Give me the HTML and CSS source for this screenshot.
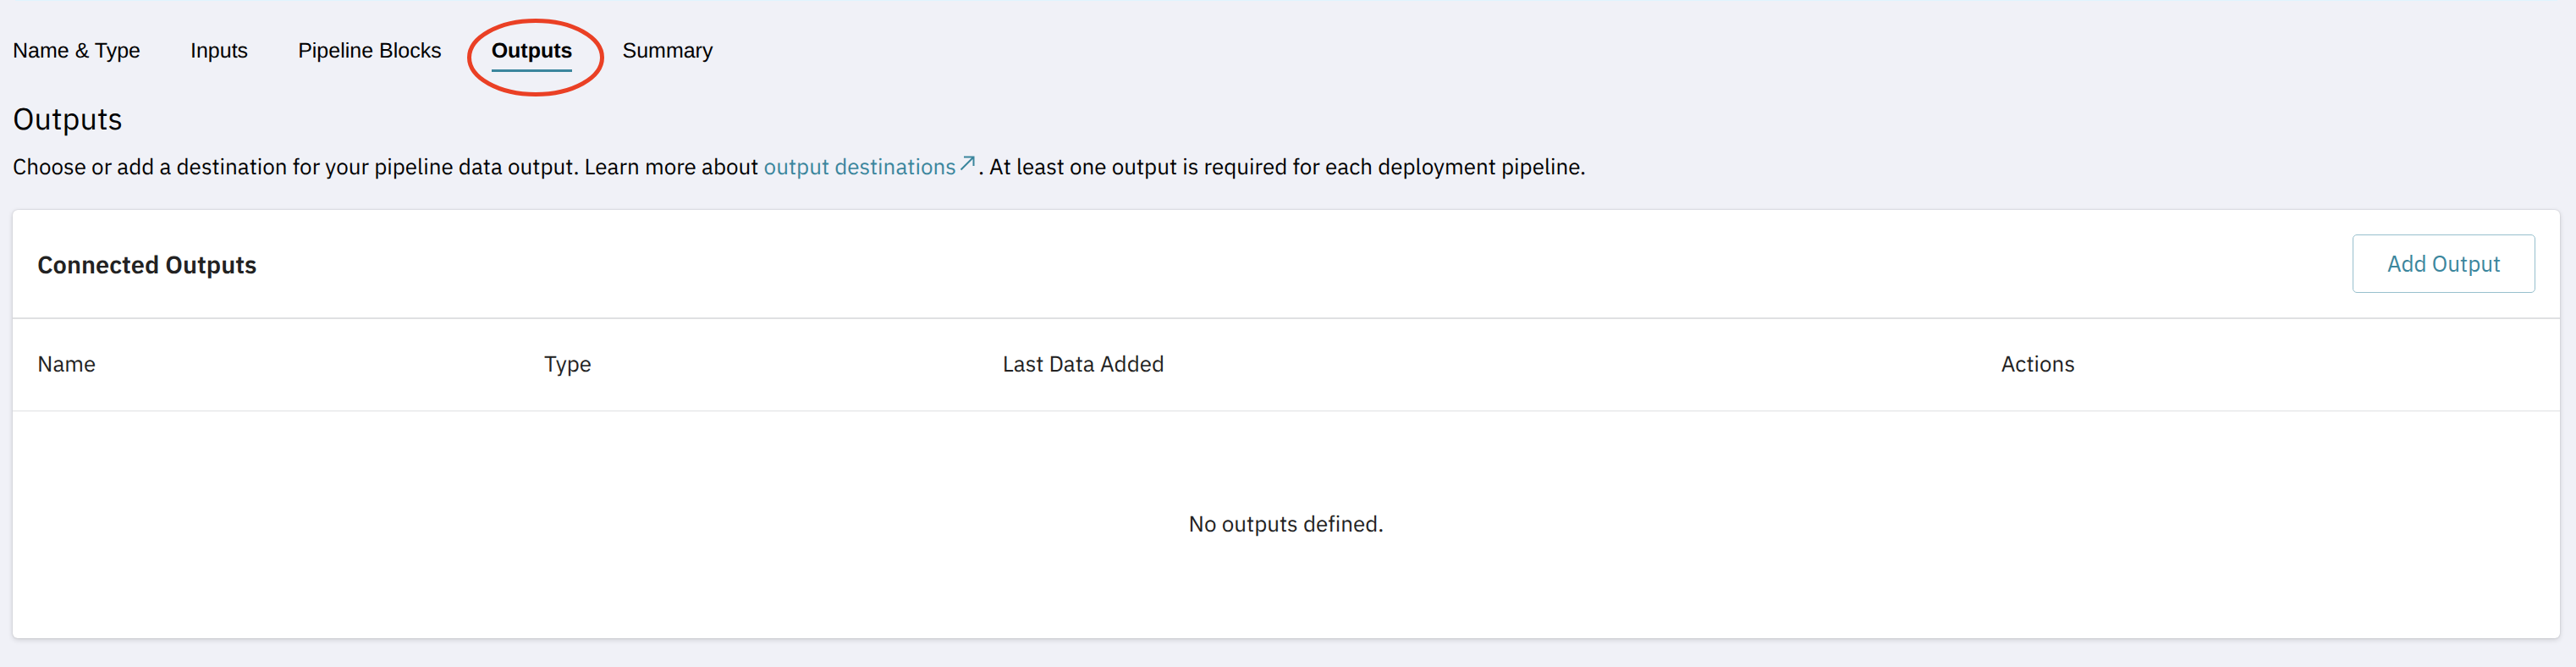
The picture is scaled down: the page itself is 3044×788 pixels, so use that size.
FILE: index.html
```html
<!DOCTYPE html>
<html lang="en">
<head>
    <meta charset="UTF-8">
    <meta name="viewport" content="width=device-width, initial-scale=1.0">
    <title>Outputs</title>
    <link rel="stylesheet" href="styles.css">
</head>
<body>
    <div class="top-strip"></div>

    <nav class="tabs">
        <a href="#">Name &amp; Type</a>
        <a href="#">Inputs</a>
        <a href="#">Pipeline Blocks</a>
        <a href="#" class="active">Outputs
            <svg class="circle" viewBox="0 0 162 92" aria-hidden="true">
                <ellipse cx="81" cy="46" rx="78.5" ry="43.5" fill="none" stroke="#ea4025" stroke-width="5"/>
            </svg>
        </a>
        <a href="#">Summary</a>
    </nav>

    <main>
        <h1>Outputs</h1>
        <p class="intro">Choose or add a destination for your pipeline data output. Learn more about <a href="#">output destinations<svg class="external" viewBox="0 0 18 18" aria-hidden="true"><path d="M1.5 16.5 L16 2 M5 1.5 H16.5 V12" fill="none" stroke="currentColor" stroke-width="2"/></svg></a>. At least one output is required for each deployment pipeline.</p>

        <section class="card">
            <div class="card-header">
                <h2>Connected Outputs</h2>
                <button type="button">Add Output</button>
            </div>
            <table>
                <thead>
                    <tr>
                        <th class="name">Name</th>
                        <th class="type">Type</th>
                        <th class="added">Last Data Added</th>
                        <th>Actions</th>
                    </tr>
                </thead>
                <tbody>
                    <tr>
                        <td colspan="4">No outputs defined.</td>
                    </tr>
                </tbody>
            </table>
        </section>
    </main>
</body>
</html>
```
FILE: styles.css
```css
*{
    box-sizing: border-box;
    padding: 0;
    margin: 0;
}

body{
    background-color: #f0f1f7;
    color: #000;
    font-family: 'IBM Plex Sans', Roboto, sans-serif;
    font-size: 26px;
    line-height: 36px;
    font-variant-ligatures: none;
    text-rendering: geometricPrecision;
}

.top-strip{
    height: 1px;
    margin: 0 22px 0 18px;
    background-color: #e0f4fe;
}

.tabs{
    display: flex;
    flex-wrap: wrap;
    gap: 20px 59px;
    padding: 41px 15px 0;
    font-family: Helvetica, 'Liberation Sans', Arial, sans-serif;
    font-size: 25px;
}

.tabs a{
    color: #000;
    text-decoration: none;
    padding-bottom: 4px;
    border-bottom: 3px solid transparent;
}

.tabs .active{
    position: relative;
    font-weight: bold;
    border-color: #3b869d;
}

/* red marker round the current tab, lies over its neighbours' gaps */
.circle{
    position: absolute;
    width: 162px;
    height: 92px;
    top: -20px;
    left: -29px;
}

main{
    padding: 31px 19px 34px 15px;
}

h1{
    font-size: 36px;
    line-height: 48px;
    font-weight: 400;
}

.intro{
    margin: 15px 0 33px;
}

.intro a{
    color: #3b869d;
    text-decoration: none;
}

.external{
    width: 18px;
    height: 18px;
    margin: 0 4px;
    vertical-align: 4px;
}

.card{
    background-color: #fff;
    color: #222;
    border-radius: 6px;
    box-shadow: 0 2px 6px rgba(0, 0, 0, .14), 0 0 2px rgba(0, 0, 0, .18);
}

.card-header{
    display: flex;
    justify-content: space-between;
    align-items: center;
    padding: 29px;
    border-bottom: 2px solid #dfe0e2;
}

h2{
    font-size: 29px;
    font-weight: 600;
}

button{
    width: 216px;
    height: 69px;
    padding-bottom: 2px;
    font: inherit;
    color: #3b869d;
    background-color: #fff;
    border: 1px solid #98c0cd;
    border-radius: 5px;
}

table{
    width: 100%;
    table-layout: fixed;
    border-collapse: collapse;
}

th{
    height: 108px;
    padding: 0 29px 1px;
    font-weight: 400;
    text-align: left;
    border-bottom: 1px solid #dfe0e2;
}

td{
    height: 269px;
    padding-bottom: 2px;
    text-align: center;
}

.name{
    width: 19.9%;
}

.type{
    width: 18%;
}

.added{
    width: 39.2%;
}
```
